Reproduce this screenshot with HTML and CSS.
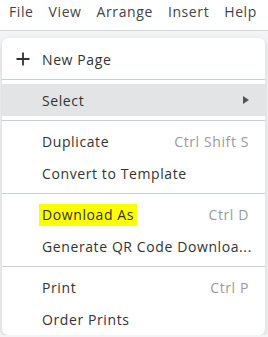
FILE: index.html
```html
<!DOCTYPE html>
<html lang="en">
<head>
    <meta charset="UTF-8">
    <meta name="viewport" content="width=device-width, initial-scale=1.0">
    <title>File Menu</title>
    <link rel="stylesheet" href="styles.css">
</head>
<body>
    <div class="menubar">
        <span class="menubar-item">File</span>
        <span class="menubar-item">View</span>
        <span class="menubar-item">Arrange</span>
        <span class="menubar-item">Insert</span>
        <span class="menubar-item">Help</span>
    </div>

    <div class="workspace">
        <div class="dropdown">
            <div class="menu-item">
                <span class="menu-icon">
                    <svg width="14" height="14" viewBox="0 0 14 14">
                        <path d="M7 0.5v13M0.5 7h13" stroke="#333" stroke-width="1.8" fill="none"/>
                    </svg>
                </span>
                <span class="menu-label">New Page</span>
            </div>
            <div class="divider"></div>
            <div class="menu-item active">
                <span class="menu-label">Select</span>
                <span class="submenu-arrow"></span>
            </div>
            <div class="divider"></div>
            <div class="menu-item">
                <span class="menu-label">Duplicate</span>
                <span class="shortcut">Ctrl Shift S</span>
            </div>
            <div class="menu-item">
                <span class="menu-label">Convert to Template</span>
            </div>
            <div class="divider"></div>
            <div class="menu-item">
                <span class="menu-label"><mark class="highlight">Download As</mark></span>
                <span class="shortcut">Ctrl D</span>
            </div>
            <div class="menu-item">
                <span class="menu-label">Generate QR Code Downloa...</span>
            </div>
            <div class="divider"></div>
            <div class="menu-item">
                <span class="menu-label">Print</span>
                <span class="shortcut">Ctrl P</span>
            </div>
            <div class="menu-item">
                <span class="menu-label">Order Prints</span>
            </div>
        </div>
    </div>
</body>
</html>
```

FILE: styles.css
```css
body {
    margin: 0;
    font-family: "Open Sans", Arial, sans-serif;
    letter-spacing: 0.6px;
    color: #333;
    background: #f3f4f6;
    overflow: hidden;
}

.menubar {
    display: flex;
    height: 30px;
    padding-left: 9px;
    background: white;
    border-bottom: 1px solid #d3d8e0;
    font-size: 14px;
    line-height: 24px;
    color: #444;
}

.menubar-item {
    margin-right: 15px;
}

.workspace {
    padding: 7px 3px 0 2px;
}

.dropdown {
    background: white;
    border-radius: 6px;
    box-shadow: 0 2px 6px rgba(0,0,0,0.15);
    padding-top: 5px;
    font-size: 14px;
}

.menu-item {
    display: flex;
    align-items: center;
    height: 32px;
    padding: 0 16px 0 40px;
    position: relative;
}

.menu-item.active {
    background: #e3e4e6;
}

.menu-icon {
    position: absolute;
    left: 14px;
    top: 9px;
    display: flex;
}

.menu-label {
    flex: 1;
    white-space: nowrap;
}

.shortcut {
    color: #9a9a9a;
}

.submenu-arrow {
    width: 0;
    height: 0;
    border-top: 4px solid transparent;
    border-bottom: 4px solid transparent;
    border-left: 6px solid #555;
    margin-right: 0;
}

.divider {
    height: 1px;
    background: #c8cdd8;
    margin: 4px 0;
}

.highlight {
    background: #ffff00;
    color: #333;
    padding: 1px 3px 2px 3px;
    margin-left: -3px;
}
```
